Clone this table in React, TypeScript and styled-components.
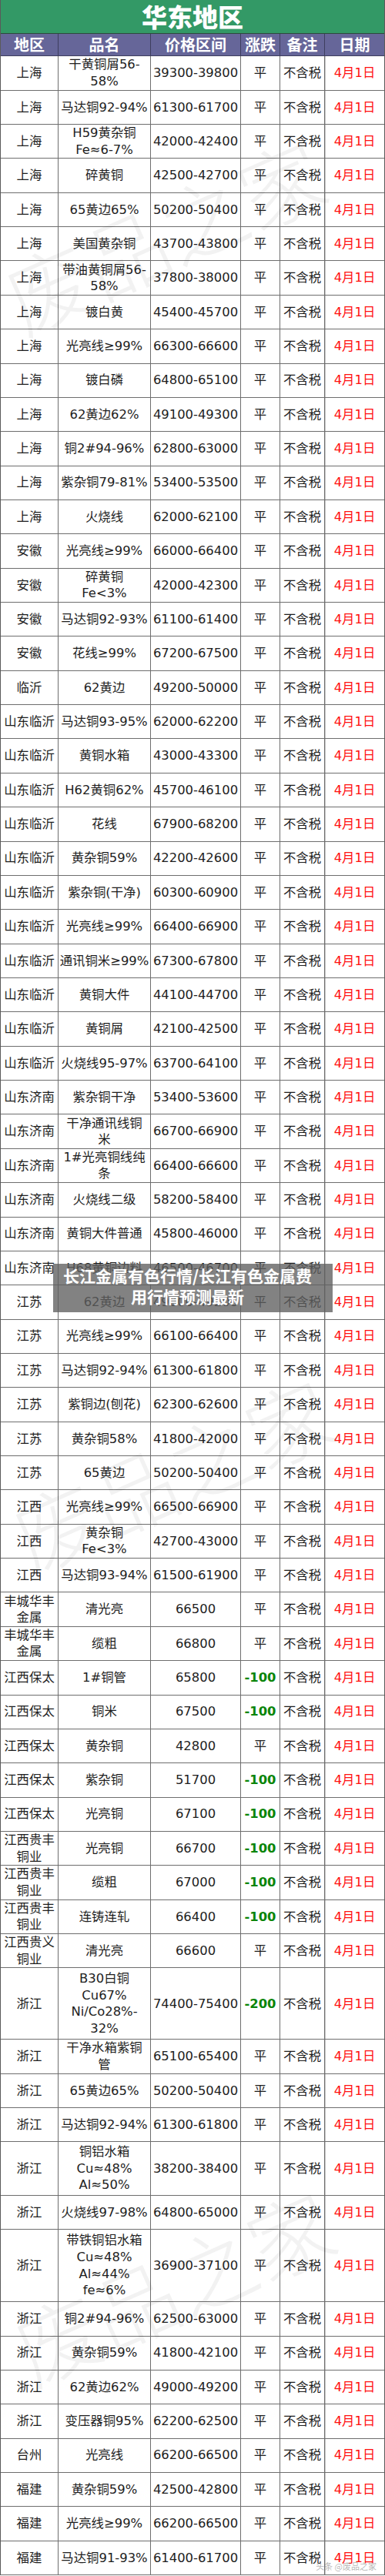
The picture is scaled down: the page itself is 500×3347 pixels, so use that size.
import React from "react";
import styled, { createGlobalStyle } from "styled-components";

const GlobalStyle = createGlobalStyle`
  html, body { margin: 0; padding: 0; background: #fff; }
  body { font-family: "DejaVu Sans", "Noto Sans CJK SC", sans-serif; }
`;

type Item = {
  r: string;
  n: string;
  p: string;
  c?: string;
  h?: number;
};

const ROW_H = 44.36;

const rows: Item[] = [
  { r: "上海", n: "干黄铜屑56-\n58%", p: "39300-39800" },
  { r: "上海", n: "马达铜92-94%", p: "61300-61700" },
  { r: "上海", n: "H59黄杂铜\nFe≈6-7%", p: "42000-42400" },
  { r: "上海", n: "碎黄铜", p: "42500-42700" },
  { r: "上海", n: "65黄边65%", p: "50200-50400" },
  { r: "上海", n: "美国黄杂铜", p: "43700-43800" },
  { r: "上海", n: "带油黄铜屑56-\n58%", p: "37800-38000" },
  { r: "上海", n: "镀白黄", p: "45400-45700" },
  { r: "上海", n: "光亮线≥99%", p: "66300-66600" },
  { r: "上海", n: "镀白磷", p: "64800-65100" },
  { r: "上海", n: "62黄边62%", p: "49100-49300" },
  { r: "上海", n: "铜2#94-96%", p: "62800-63000" },
  { r: "上海", n: "紫杂铜79-81%", p: "53400-53500" },
  { r: "上海", n: "火烧线", p: "62000-62100" },
  { r: "安徽", n: "光亮线≥99%", p: "66000-66400" },
  { r: "安徽", n: "碎黄铜\nFe<3%", p: "42000-42300" },
  { r: "安徽", n: "马达铜92-93%", p: "61100-61400" },
  { r: "安徽", n: "花线≥99%", p: "67200-67500" },
  { r: "临沂", n: "62黄边", p: "49200-50000" },
  { r: "山东临沂", n: "马达铜93-95%", p: "62000-62200" },
  { r: "山东临沂", n: "黄铜水箱", p: "43000-43300" },
  { r: "山东临沂", n: "H62黄铜62%", p: "45700-46100" },
  { r: "山东临沂", n: "花线", p: "67900-68200" },
  { r: "山东临沂", n: "黄杂铜59%", p: "42200-42600" },
  { r: "山东临沂", n: "紫杂铜(干净)", p: "60300-60900" },
  { r: "山东临沂", n: "光亮线≥99%", p: "66400-66900" },
  { r: "山东临沂", n: "通讯铜米≥99%", p: "67300-67800" },
  { r: "山东临沂", n: "黄铜大件", p: "44100-44700" },
  { r: "山东临沂", n: "黄铜屑", p: "42100-42500" },
  { r: "山东临沂", n: "火烧线95-97%", p: "63700-64100" },
  { r: "山东济南", n: "紫杂铜干净", p: "53400-53600" },
  { r: "山东济南", n: "干净通讯线铜\n米", p: "66700-66900" },
  { r: "山东济南", n: "1#光亮铜线纯\n条", p: "66400-66600" },
  { r: "山东济南", n: "火烧线二级", p: "58200-58400" },
  { r: "山东济南", n: "黄铜大件普通", p: "45800-46000" },
  { r: "山东济南", n: "H68黄铜边料", p: "46500-46700" },
  { r: "江苏", n: "62黄边", p: "49000-49200" },
  { r: "江苏", n: "光亮线≥99%", p: "66100-66400" },
  { r: "江苏", n: "马达铜92-94%", p: "61300-61800" },
  { r: "江苏", n: "紫铜边(刨花)", p: "62300-62600" },
  { r: "江苏", n: "黄杂铜58%", p: "41800-42000" },
  { r: "江苏", n: "65黄边", p: "50200-50400" },
  { r: "江西", n: "光亮线≥99%", p: "66500-66900" },
  { r: "江西", n: "黄杂铜\nFe<3%", p: "42700-43000" },
  { r: "江西", n: "马达铜93-94%", p: "61500-61900" },
  { r: "丰城华丰\n金属", n: "清光亮", p: "66500" },
  { r: "丰城华丰\n金属", n: "缆粗", p: "66800" },
  { r: "江西保太", n: "1#铜管", p: "65800", c: "-100" },
  { r: "江西保太", n: "铜米", p: "67500", c: "-100" },
  { r: "江西保太", n: "黄杂铜", p: "42800" },
  { r: "江西保太", n: "紫杂铜", p: "51700", c: "-100" },
  { r: "江西保太", n: "光亮铜", p: "67100", c: "-100" },
  { r: "江西贵丰\n铜业", n: "光亮铜", p: "66700", c: "-100" },
  { r: "江西贵丰\n铜业", n: "缆粗", p: "67000", c: "-100" },
  { r: "江西贵丰\n铜业", n: "连铸连轧", p: "66400", c: "-100" },
  { r: "江西贵义\n铜业", n: "清光亮", p: "66600" },
  { r: "浙江", n: "B30白铜\nCu67%\nNi/Co28%-\n32%", p: "74400-75400", c: "-200", h: 93 },
  { r: "浙江", n: "干净水箱紫铜\n管", p: "65100-65400" },
  { r: "浙江", n: "65黄边65%", p: "50200-50400" },
  { r: "浙江", n: "马达铜92-94%", p: "61300-61800" },
  { r: "浙江", n: "铜铝水箱\nCu≈48%\nAl≈50%", p: "38200-38400", h: 69.3 },
  { r: "浙江", n: "火烧线97-98%", p: "64800-65000" },
  { r: "浙江", n: "带铁铜铝水箱\nCu≈48%\nAl≈44%\nfe≈6%", p: "36900-37100", h: 94 },
  { r: "浙江", n: "铜2#94-96%", p: "62500-63000" },
  { r: "浙江", n: "黄杂铜59%", p: "41800-42100" },
  { r: "浙江", n: "62黄边62%", p: "49000-49200" },
  { r: "浙江", n: "变压器铜95%", p: "62200-62500" },
  { r: "台州", n: "光亮线", p: "66200-66500" },
  { r: "福建", n: "黄杂铜59%", p: "42500-42800" },
  { r: "福建", n: "光亮线≥99%", p: "66200-66500" },
  { r: "福建", n: "马达铜91-93%", p: "61400-61700" },
];

const Sheet = styled.div`
  position: relative;
  width: 500px;
  box-sizing: border-box;
  border-left: 1px solid #5a5a5a;
  border-right: 1px solid #5a5a5a;
  overflow: hidden;
  background: #fff;
`;

const Title = styled.div`
  height: 43.7px;
  box-sizing: border-box;
  padding-bottom: 1px;
  background: #339966;
  border-bottom: 1px solid #2c4a3c;
  color: #fff;
  display: flex;
  align-items: center;
  justify-content: center;
  font-family: "Noto Sans CJK SC", sans-serif;
  font-weight: 900;
  font-size: 33px;
  line-height: 38px;
`;

const Grid = styled.div<{ $h: number; $head?: boolean }>`
  display: grid;
  grid-template-columns: 75px 120px 117px 51px 58px 1fr;
  height: ${(p) => p.$h}px;
  box-sizing: border-box;
  border-bottom: 1px solid ${(p) => (p.$head ? "#3e3e5e" : "#6e6e6e")};
  background: ${(p) => (p.$head ? "#666699" : "transparent")};
`;

const HeadCell = styled.div`
  display: flex;
  align-items: center;
  justify-content: center;
  border-right: 1px solid #3e3e5e;
  color: #fff;
  font-family: "Noto Sans CJK SC", sans-serif;
  font-weight: 700;
  font-size: 20px;
  line-height: 26px;
  &:last-child { border-right: none; }
`;

const Cell = styled.div<{ $tone?: "red" | "green" }>`
  display: flex;
  align-items: center;
  justify-content: center;
  text-align: center;
  white-space: pre-line;
  border-right: 1px solid #6e6e6e;
  font-size: 16.4px;
  line-height: 21.6px;
  color: ${(p) =>
    p.$tone === "red" ? "#ff1010" : p.$tone === "green" ? "#0a850a" : "#1e1e1e"};
  font-weight: ${(p) => (p.$tone === "green" ? 700 : 400)};
  &:last-child { border-right: none; }
`;

const DateCell = styled(Cell)`
  box-shadow: inset 1px 0 0 #c8c8c8;
`;

const Banner = styled.div`
  position: absolute;
  left: 68px;
  top: 1642px;
  width: 363px;
  height: 63px;
  box-sizing: border-box;
  padding: 2px 22px 0 8px;
  background: rgba(95, 95, 95, 0.78);
  color: #fff;
  font-family: "Noto Sans CJK SC", sans-serif;
  font-weight: 700;
  font-size: 21px;
  line-height: 27px;
  text-align: center;
`;

/* faint diagonal "废品之家" stamp that lies over the table */
const Watermark = styled.div<{ $top: number; $left: number }>`
  position: absolute;
  top: ${(p) => p.$top}px;
  left: ${(p) => p.$left}px;
  font-family: "Noto Sans CJK SC", sans-serif;
  font-weight: 300;
  font-size: 110px;
  line-height: 110px;
  color: rgba(0, 0, 0, 0.05);
  white-space: nowrap;
  transform: rotate(-24deg);
  transform-origin: left top;
  pointer-events: none;
`;

const Credit = styled.div`
  position: absolute;
  right: 10px;
  bottom: 4px;
  font-family: "Noto Sans CJK SC", sans-serif;
  font-size: 11px;
  color: rgba(120, 120, 120, 0.55);
`;

const heads = ["地区", "品名", "价格区间", "涨跌", "备注", "日期"];

export default function App() {
  return (
    <>
      <GlobalStyle />
      <Sheet>
        <Title>华东地区</Title>
        <Grid $h={29.6} $head>
          {heads.map((h) => (
            <HeadCell key={h}>{h}</HeadCell>
          ))}
        </Grid>
        {rows.map((row, i) => (
          <Grid key={i} $h={row.h ?? ROW_H}>
            <Cell>{row.r}</Cell>
            <Cell>{row.n}</Cell>
            <Cell>{row.p}</Cell>
            <Cell $tone={row.c ? "green" : undefined}>{row.c ?? "平"}</Cell>
            <Cell>不含税</Cell>
            <DateCell $tone="red">4月1日</DateCell>
          </Grid>
        ))}
        <Watermark $top={342} $left={-12}>废品之家</Watermark>
        <Watermark $top={1952} $left={-2}>废品之家</Watermark>
        <Watermark $top={3007} $left={0}>废品之家</Watermark>
        <Banner>
          长江金属有色行情/长江有色金属费
          <br />
          用行情预测最新
        </Banner>
        <Credit>头条 @废品之家</Credit>
      </Sheet>
    </>
  );
}
